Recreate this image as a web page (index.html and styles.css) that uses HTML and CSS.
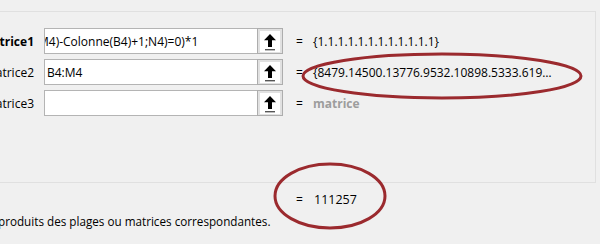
FILE: index.html
```html
<!DOCTYPE html>
<html lang="fr">
<head>
  <meta charset="UTF-8" />
  <title>Arguments de la fonction</title>
  <link rel="stylesheet" href="styles.css">
</head>
<body>
  <div class="panel">
    <div class="arg">
      <span class="name bold">Matrice1</span>
      <div class="field"><span class="value scrolled">M4)-Colonne(B4)+1;N4)=0)*1</span></div>
      <button class="pick" type="button">
        <svg viewBox="0 0 16 18" width="16" height="18"><path d="M8 1 L14 7.2 L10 7.2 L10 14 L6 14 L6 7.2 L2 7.2 Z" fill="#000"/><rect x="3" y="16" width="10" height="1.4" fill="#555"/></svg>
      </button>
      <span class="eq">=</span>
      <span class="result">{1.1.1.1.1.1.1.1.1.1.1.1}</span>
    </div>
    <div class="arg">
      <span class="name">Matrice2</span>
      <div class="field"><span class="value">B4:M4</span></div>
      <button class="pick" type="button">
        <svg viewBox="0 0 16 18" width="16" height="18"><path d="M8 1 L14 7.2 L10 7.2 L10 14 L6 14 L6 7.2 L2 7.2 Z" fill="#000"/><rect x="3" y="16" width="10" height="1.4" fill="#555"/></svg>
      </button>
      <span class="eq">=</span>
      <span class="result">{8479.14500.13776.9532.10898.5333.619…</span>
    </div>
    <div class="arg">
      <span class="name">Matrice3</span>
      <div class="field"></div>
      <button class="pick" type="button">
        <svg viewBox="0 0 16 18" width="16" height="18"><path d="M8 1 L14 7.2 L10 7.2 L10 14 L6 14 L6 7.2 L2 7.2 Z" fill="#000"/><rect x="3" y="16" width="10" height="1.4" fill="#555"/></svg>
      </button>
      <span class="eq">=</span>
      <span class="result hint">matrice</span>
    </div>
  </div>

  <div class="total">
    <span class="eq">=</span>
    <span class="sum">111257</span>
  </div>
  <p class="desc">produits des plages ou matrices correspondantes.</p>

  <svg class="marks" width="600" height="244" viewBox="0 0 600 244">
    <ellipse cx="442" cy="76" rx="139" ry="22" />
    <ellipse cx="330" cy="196" rx="55" ry="32" />
  </svg>
</body>
</html>
```

FILE: styles.css
```css
body {
  margin: 0;
  background: #f0f0f0;
  font-family: "Open Sans", "Noto Sans", sans-serif;
  font-size: 12px;
  color: #000;
  width: 600px;
  height: 244px;
  overflow: hidden;
  position: relative;
}
.panel {
  margin: 11px 0 0 -40px;
  width: 636px;
  height: 172px;
  border: 1px solid #e0e0e0;
  border-left: none;
  padding-top: 16px;
  box-sizing: border-box;
}
.arg {
  display: flex;
  align-items: center;
  height: 26px;
  margin-bottom: 5px;
}
.name {
  width: 74px;
  flex: none;
  text-align: right;
  white-space: nowrap;
}
.bold {
  font-weight: bold;
}
.field {
  flex: none;
  margin-left: 10px;
  width: 213px;
  height: 26px;
  background: #fff;
  border: 1px solid #b4b4b4;
  border-right: none;
  box-sizing: border-box;
  display: flex;
  align-items: center;
  padding-left: 2px;
  overflow: hidden;
  white-space: nowrap;
}
.scrolled {
  margin-left: -9px;
}
.pick {
  flex: none;
  width: 26px;
  height: 26px;
  padding: 0;
  border: 1px solid #adadad;
  background: #e1e1e1;
  display: flex;
  align-items: center;
  justify-content: center;
}
.pick svg {
  background: #fff;
  padding: 2px 2px 1px;
}
.eq {
  margin-left: 13px;
  width: 7px;
  flex: none;
}
.result {
  margin-left: 10px;
  white-space: nowrap;
}
.hint {
  color: #9d9d9d;
  font-weight: bold;
}
.total {
  display: flex;
  align-items: center;
  margin-top: 8px;
  padding-left: 283px;
  height: 17px;
}
.sum {
  margin-left: 11px;
  font-size: 12.5px;
}
.desc {
  margin: 5px 0 0 -2px;
  white-space: nowrap;
  font-size: 11.7px;
}
.marks {
  position: absolute;
  left: 0;
  top: 0;
  pointer-events: none;
}
.marks ellipse {
  fill: none;
  stroke: #9b2a2e;
  stroke-width: 3;
}
```
